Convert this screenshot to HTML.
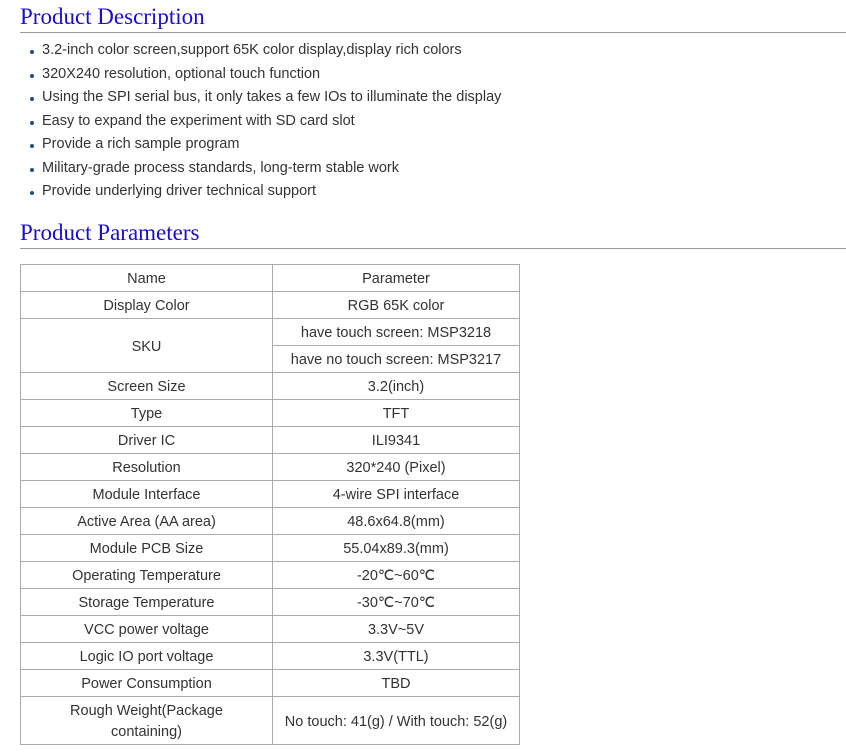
<!DOCTYPE html>
<html><head><style>
body{margin:0;background:#fff;font-family:"Liberation Sans",sans-serif;color:#333;}
h2{position:absolute;left:20px;margin:0;font-family:"Liberation Serif",serif;font-weight:normal;font-size:23px;color:#1a0dd0;width:826px;border-bottom:1px solid #999;line-height:26px;padding-bottom:2px;}
ul{position:absolute;left:28px;top:40px;margin:0;padding:0;list-style:none;font-size:14.5px;}
li{height:23.5px;line-height:20px;position:relative;padding-left:14px;}
li:before{content:"";position:absolute;left:2px;top:10px;width:4px;height:4px;border-radius:50%;background:#1c4f86;}
table{position:absolute;left:20px;top:264px;border-collapse:collapse;font-size:14.5px;}
td{border:1px solid #aaa;text-align:center;height:24px;padding:2px 0 0;line-height:18px;}
</style></head><body>
<h2 style="top:4px">Product Description</h2>
<ul>
<li>3.2-inch color screen,support 65K color display,display rich colors</li>
<li>320X240 resolution, optional touch function</li>
<li>Using the SPI serial bus, it only takes a few IOs to illuminate the display</li>
<li>Easy to expand the experiment with SD card slot</li>
<li>Provide a rich sample program</li>
<li>Military-grade process standards, long-term stable work</li>
<li>Provide underlying driver technical support</li>
</ul>
<h2 style="top:220px">Product Parameters</h2>
<table>
<tr><td style="width:251px">Name</td><td style="width:246px">Parameter</td></tr>
<tr><td>Display Color</td><td>RGB 65K color</td></tr>
<tr><td rowspan="2">SKU</td><td>have touch screen: MSP3218</td></tr>
<tr><td>have no touch screen: MSP3217</td></tr>
<tr><td>Screen Size</td><td>3.2(inch)</td></tr>
<tr><td>Type</td><td>TFT</td></tr>
<tr><td>Driver IC</td><td>ILI9341</td></tr>
<tr><td>Resolution</td><td>320*240 (Pixel)</td></tr>
<tr><td>Module Interface</td><td>4-wire SPI interface</td></tr>
<tr><td>Active Area (AA area)</td><td>48.6x64.8(mm)</td></tr>
<tr><td>Module PCB Size</td><td>55.04x89.3(mm)</td></tr>
<tr><td>Operating Temperature</td><td>-20℃~60℃</td></tr>
<tr><td>Storage Temperature</td><td>-30℃~70℃</td></tr>
<tr><td>VCC power voltage</td><td>3.3V~5V</td></tr>
<tr><td>Logic IO port voltage</td><td>3.3V(TTL)</td></tr>
<tr><td>Power Consumption</td><td>TBD</td></tr>
<tr><td style="height:45px;line-height:21px">Rough Weight(Package<br>containing)</td><td style="height:45px">No touch: 41(g) / With touch: 52(g)</td></tr>
</table>
</body></html>
